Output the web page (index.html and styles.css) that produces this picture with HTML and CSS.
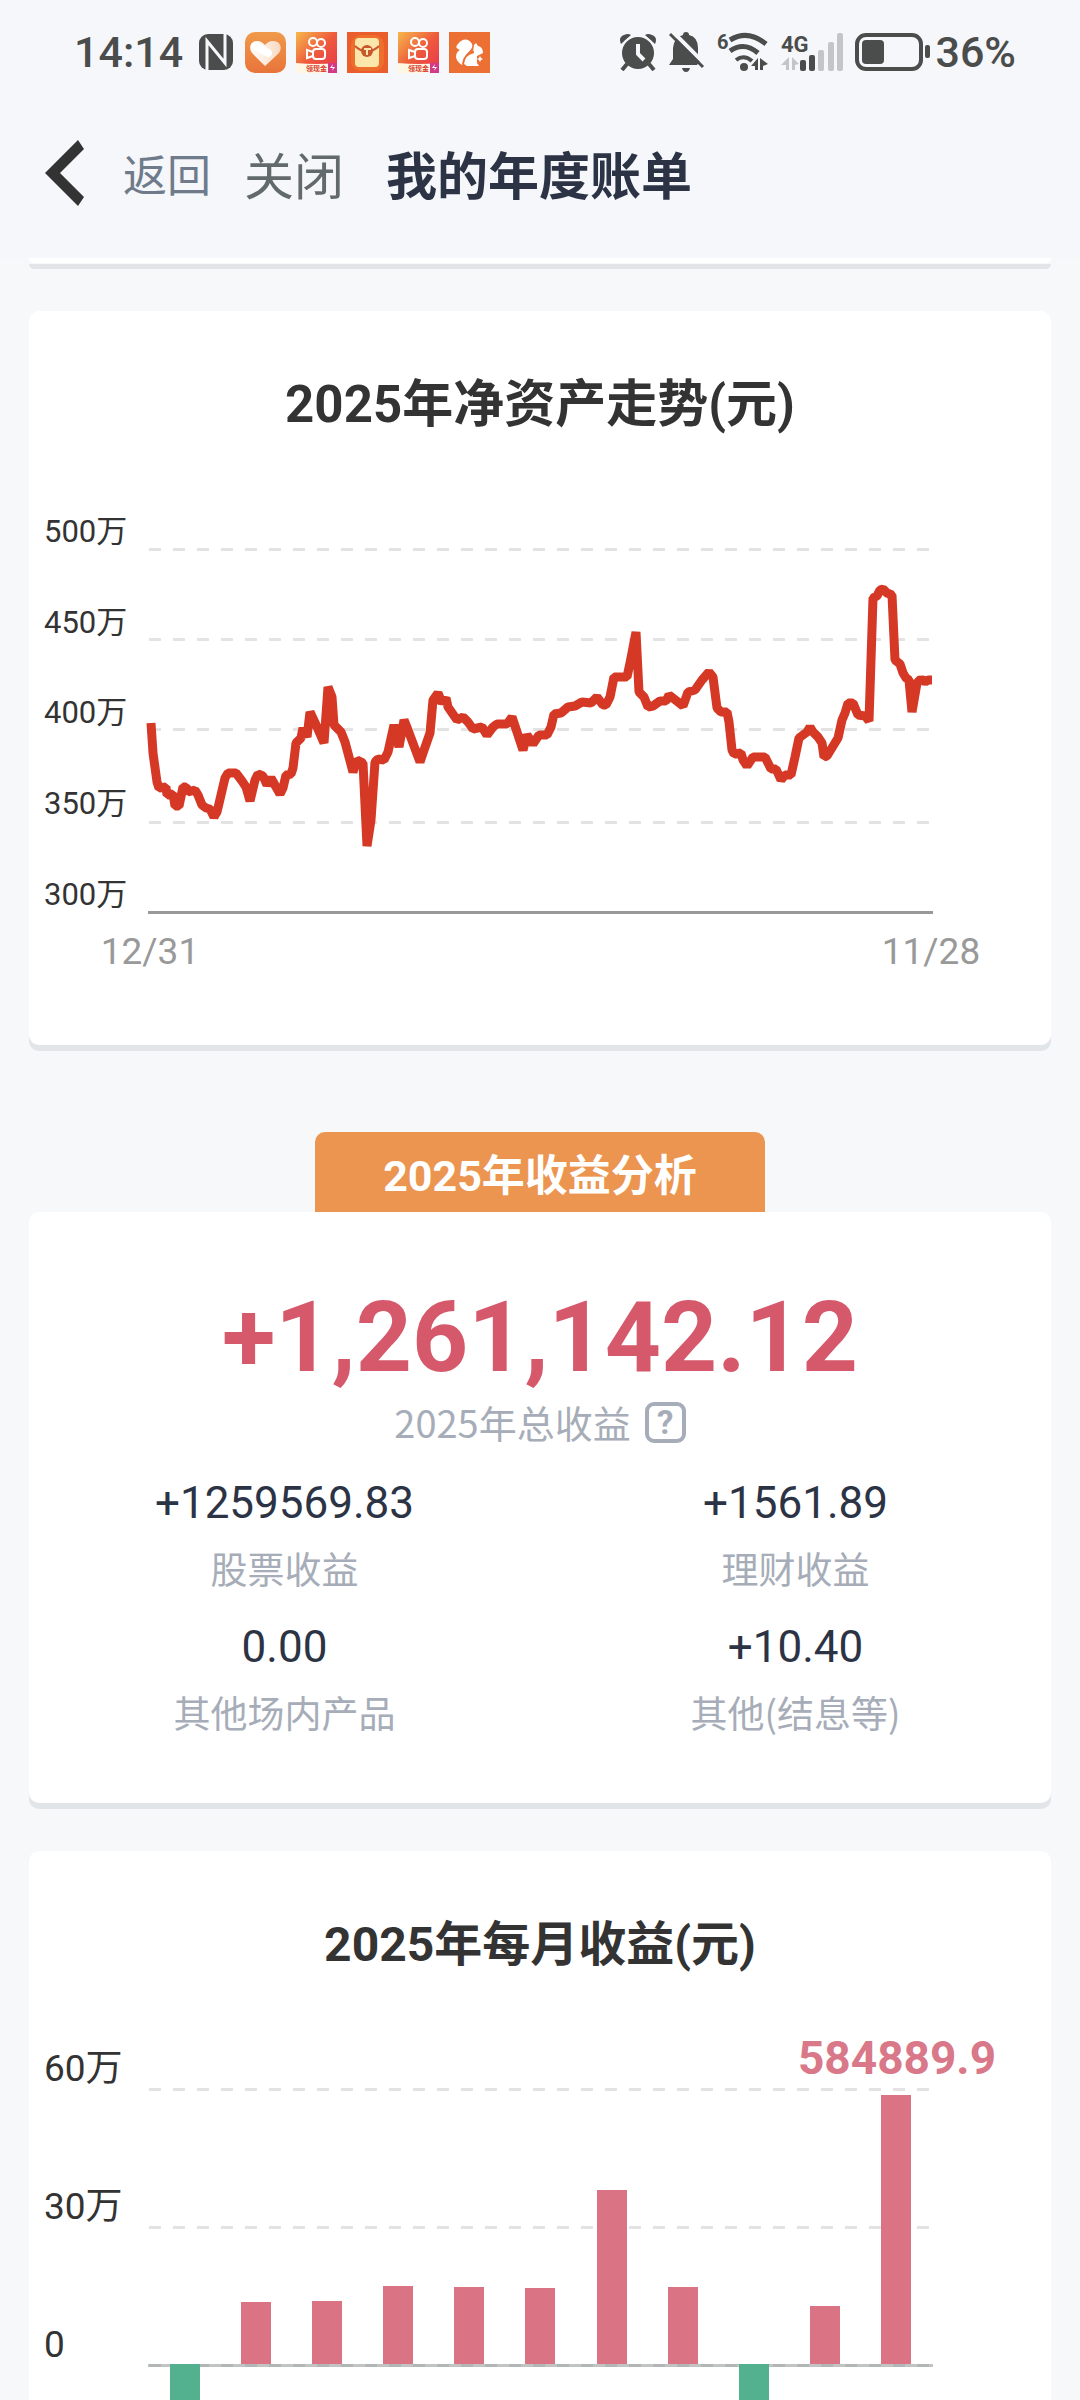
FILE: index.html
```
<!DOCTYPE html>
<html lang="zh-CN">

<head>
    <meta charset="UTF-8">
    <meta name="viewport" content="width=device-width, initial-scale=1.0">
    <title>我的年度账单</title>
    <link rel="stylesheet" href="styles.css">
</head>

<body>
    <div class="app">
        <header class="top">
            <!-- 状态栏 -->
            <div class="status">
                <div class="status-left">
                    <span class="status-time">14:14</span>
                    <svg class="icon-nfc" width="34" height="36" viewBox="0 0 34 36">
                        <rect width="34" height="36" rx="9" fill="#4b4d4c" />
                        <path d="M8 36V7l18 22V0" fill="none" stroke="#f5f7fb" stroke-width="3" />
                        <path d="M13 36V19l8 10" fill="none" stroke="#4b4d4c" stroke-width="3" />
                    </svg>
                    <div class="status-apps">
                        <svg width="41" height="41" viewBox="0 0 41 41">
                            <defs>
                                <linearGradient id="heartBg" x1="0" y1="0" x2="0" y2="1">
                                    <stop offset="0" stop-color="#f09a4b" />
                                    <stop offset="1" stop-color="#e8743a" />
                                </linearGradient>
                                <linearGradient id="heartFg" x1="0" y1="0" x2="1" y2="0">
                                    <stop offset="0" stop-color="#fff" />
                                    <stop offset="1" stop-color="#f9d9c0" />
                                </linearGradient>
                            </defs>
                            <rect width="41" height="41" rx="10" fill="url(#heartBg)" />
                            <path d="M20 34L8 22C3 17 5 9 12 9c4 0 6 2 8 4 2-2 4-4 8-4 8 0 10 8 5 13z" fill="url(#heartFg)" />
                            <path d="M11 14l12 7" stroke="#fff" stroke-width="8" stroke-linecap="round" />
                        </svg>
                        <svg width="41" height="41" viewBox="0 0 41 41">
                            <defs>
                                <linearGradient id="videoBg" x1="0" y1="0" x2="1" y2="1">
                                    <stop offset="0" stop-color="#f6b84c" />
                                    <stop offset="0.5" stop-color="#ee5a3c" />
                                    <stop offset="1" stop-color="#e8344e" />
                                </linearGradient>
                            </defs>
                            <rect width="41" height="41" fill="url(#videoBg)" />
                            <g fill="none" stroke="#fff" stroke-width="2">
                                <circle cx="17" cy="10" r="4" />
                                <circle cx="25" cy="11" r="4" />
                                <rect x="17" y="17" width="12" height="10" rx="3" />
                                <path d="M17 20l-6-2v8l6-2" />
                            </g>
                            <path d="M0 31q20 2 41 0v10H0z" fill="#fff6e3" />
                            <path d="M32 31h9v10h-9z" fill="#d23a86" />
                            <path d="M37 32l-3 4h3l-1 3 3-4h-3z" fill="#fff" />
                            <text class="app-tag" x="10" y="39">领现金</text>
                        </svg>
                        <svg width="41" height="41" viewBox="0 0 41 41">
                            <rect width="41" height="41" fill="#ea5e2c" />
                            <rect x="4" y="3" width="33" height="36" rx="10" fill="#ee6f2c" />
                            <rect x="8" y="6" width="24" height="29" rx="4" fill="#fbe6ac" />
                            <path d="M8 14c7 7 17 7 24 0" fill="none" stroke="#c9572c" stroke-width="2" />
                            <circle cx="20" cy="19" r="6" fill="#c9572c" />
                            <path d="M17 17h7M20 17v6" stroke="#fbe6ac" stroke-width="2" />
                        </svg>
                        <svg width="41" height="41" viewBox="0 0 41 41">
                            <rect width="41" height="41" fill="url(#videoBg)" />
                            <g fill="none" stroke="#fff" stroke-width="2">
                                <circle cx="17" cy="10" r="4" />
                                <circle cx="25" cy="11" r="4" />
                                <rect x="17" y="17" width="12" height="10" rx="3" />
                                <path d="M17 20l-6-2v8l6-2" />
                            </g>
                            <path d="M0 31q20 2 41 0v10H0z" fill="#fff6e3" />
                            <path d="M32 31h9v10h-9z" fill="#d23a86" />
                            <path d="M37 32l-3 4h3l-1 3 3-4h-3z" fill="#fff" />
                            <text class="app-tag" x="10" y="39">领现金</text>
                        </svg>
                        <svg width="41" height="41" viewBox="0 0 41 41">
                            <rect width="41" height="41" fill="#ec7034" />
                            <path d="M13 33C4 27 7 20 11 18c-5-2-4-4-2-6 4-6 11-6 14 0 2 5-5 8-7 13-1 3-2 5-3 8z" fill="#fff" />
                            <path d="M15 32c0-6 4-10 9-12l1-7 2-2 2 3c4 1 5 4 5 7l-6 3 0 7 2 3H18z" fill="#fff" />
                            <path d="M14 32q1-10 11-12" fill="none" stroke="#ec7034" stroke-width="2" />
                            <path d="M31 24l1 2 2 1-2 1-1 2-1-2-2-1 2-1z" fill="#fff" />
                        </svg>
                    </div>
                </div>
                <div class="status-right">
                    <svg width="38" height="38" viewBox="0 0 38 38">
                        <path d="M2 11Q-1 4 5 2q4-2 7 0zM36 11q3-7-3-9-4-2-7 0z" fill="#4b4d4c" />
                        <circle cx="19" cy="20" r="18" fill="#f5f7fb" />
                        <path d="M8 31l-5 6M30 31l5 6" stroke="#4b4d4c" stroke-width="4" />
                        <circle cx="19" cy="20" r="16" fill="#4b4d4c" />
                        <path d="M19 11v10l6 6" fill="none" stroke="#f5f7fb" stroke-width="4" />
                    </svg>
                    <svg width="36" height="40" viewBox="0 0 36 40">
                        <path d="M0 33l4-6V16Q5 5 14 3q0-3 3-3t3 3q9 2 9 13v11l6 6z" fill="#4b4d4c" />
                        <path d="M13 36h8q-1 4-4 4t-4-4z" fill="#4b4d4c" />
                        <path d="M3-1l34 34" stroke="#f5f7fb" stroke-width="4" />
                        <path d="M27 34h10v-11z" fill="#f5f7fb" />
                        <path d="M1 2l33 33" stroke="#4b4d4c" stroke-width="3" />
                    </svg>
                    <svg class="icon-net" width="52" height="42" viewBox="0 0 52 42">
                        <text class="net-tag" x="0" y="18">6</text>
                        <g fill="none" stroke="#4b4d4c" stroke-width="4">
                            <path d="M13 9q18-11 36 4" stroke-width="5" />
                            <path d="M13 20q14-10 28 2" stroke-width="5" />
                            <path d="M19 29q8-6 16 1" />
                        </g>
                        <circle cx="27" cy="36" r="4" fill="#4b4d4c" />
                        <path d="M41 27v12h-3v-4h-4zM43 27v12h3v-4l5-2z" fill="#4b4d4c" />
                    </svg>
                    <svg class="icon-net" width="62" height="40" viewBox="0 0 62 40">
                        <text class="net-tag big" x="0" y="20">4G</text>
                        <path d="M8 25v13H5v-5H0zM11 25v13h3v-5l4-1z" fill="#c3c5c8" />
                        <rect x="19" y="28" width="6" height="11" rx="2" fill="#4b4d4c" />
                        <rect x="28" y="23" width="6" height="16" rx="2" fill="#4b4d4c" />
                        <rect x="37" y="18" width="6" height="21" rx="2" fill="#c3c5c8" />
                        <rect x="47" y="10" width="6" height="29" rx="2" fill="#c3c5c8" />
                        <rect x="56" y="1" width="6" height="38" rx="2" fill="#c3c5c8" />
                    </svg>
                    <div class="status-battery">
                        <svg width="76" height="38" viewBox="0 0 76 38">
                            <rect x="2" y="2" width="64" height="34" rx="9" fill="none" stroke="#4b4d4c" stroke-width="4" />
                            <rect x="7" y="7" width="22" height="24" rx="4" fill="#4b4d4c" />
                            <rect x="70" y="12" width="5" height="13" rx="2" fill="#4b4d4c" />
                        </svg>
                        <span>36%</span>
                    </div>
                </div>
            </div>
            <!-- 导航栏 -->
            <nav class="nav">
                <button type="button" class="nav-arrow" aria-label="后退">
                    <svg width="40" height="66" viewBox="0 0 40 66">
                        <path d="M34 0l6 9-24 24 24 24-6 9L1 33z" fill="#333" />
                    </svg>
                </button>
                <button type="button" class="nav-back">返回</button>
                <button type="button" class="nav-close">关闭</button>
                <h1 class="nav-title">我的年度账单</h1>
            </nav>
        </header>

        <main class="content">
            <section class="card card-prev"></section>

            <!-- 净资产走势 -->
            <section class="card card-trend">
                <h2 class="card-title large">2025年净资产走势(元)</h2>
                <svg class="chart" viewBox="0 0 1022 520">
                    <g class="grid">
                        <path d="M120 69H904" />
                        <path d="M120 159H904" />
                        <path d="M120 249H904" />
                        <path d="M120 342H904" />
                    </g>
                    <path class="axis" d="M119 432H904" />
                    <g class="label-y">
                        <text x="15" y="62">500万</text>
                        <text x="15" y="153">450万</text>
                        <text x="15" y="243">400万</text>
                        <text x="15" y="334">350万</text>
                        <text x="15" y="425">300万</text>
                    </g>
                    <g class="label-x">
                        <text x="121" y="484">12/31</text>
                        <text x="902" y="484">11/28</text>
                    </g>
                    <polyline class="line" points="122,243 124,273 128,302 130,308 137,307 138,315 144,314 146,326 150,326 154,307 157,307 159,312 166,310 169,315 173,325 177,328 181,329 185,337 188,332 196,298 199,293 207,293 213,301 217,307 221,321 226,300 229,294 234,296 238,305 242,298 247,307 251,314 254,308 257,295 262,294 264,288 267,263 272,258 274,248 278,257 281,232 288,247 295,263 299,207 303,217 305,245 312,252 316,262 324,292 328,280 334,283 338,366 342,340 346,282 349,279 355,280 359,272 365,245 370,267 375,240 379,250 391,282 394,273 401,253 404,220 409,213 413,223 417,218 419,227 428,240 434,237 439,242 444,249 453,247 458,255 464,247 468,244 478,244 483,237 494,270 498,255 504,264 510,255 518,255 522,247 525,234 532,233 539,227 546,226 553,222 562,223 568,217 574,225 577,225 581,217 585,197 591,197 598,197 601,183 607,152 610,212 615,217 619,227 624,226 631,221 637,221 640,215 649,222 654,226 659,212 666,210 673,200 680,192 684,197 688,228 692,232 698,232 700,242 703,270 705,274 712,273 714,280 718,286 724,277 736,277 739,283 742,289 747,289 752,300 756,295 762,295 766,277 770,258 778,252 781,247 784,252 789,257 793,263 795,277 798,276 809,258 813,240 816,233 819,223 824,223 829,235 836,236 840,241 844,118 848,116 851,110 854,109 858,113 863,115 866,180 871,184 874,193 877,198 880,200 883,232 888,203 892,199 896,202 899,200 903,200" />
                </svg>
            </section>

            <!-- 收益分析 -->
            <h2 class="tab">2025年收益分析</h2>
            <section class="card card-profit">
                <p class="total">+1,261,142.12</p>
                <div class="total-label">
                    <span>2025年总收益</span>
                    <button type="button" class="help" aria-label="说明">?</button>
                </div>
                <dl class="profit-list">
                    <div class="profit-item">
                        <dd>+1259569.83</dd>
                        <dt>股票收益</dt>
                    </div>
                    <div class="profit-item">
                        <dd>+1561.89</dd>
                        <dt>理财收益</dt>
                    </div>
                    <div class="profit-item">
                        <dd>0.00</dd>
                        <dt>其他场内产品</dt>
                    </div>
                    <div class="profit-item">
                        <dd>+10.40</dd>
                        <dt>其他(结息等)</dt>
                    </div>
                </dl>
            </section>

            <!-- 每月收益 -->
            <section class="card card-month">
                <h2 class="card-title">2025年每月收益(元)</h2>
                <svg class="chart" viewBox="0 0 1022 480">
                    <g class="grid">
                        <path d="M120 69H904" />
                        <path d="M120 207H904" />
                    </g>
                    <path class="axis light" d="M119 345H904" />
                    <path class="axis dash" d="M120 345H904" />
                    <g class="label-y big">
                        <text x="15" y="61">60万</text>
                        <text x="15" y="199">30万</text>
                        <text x="15" y="337">0</text>
                    </g>
                    <g class="bar-up">
                        <rect x="212" y="282" width="30" height="62" />
                        <rect x="283" y="281" width="30" height="63" />
                        <rect x="354" y="266" width="30" height="78" />
                        <rect x="425" y="267" width="30" height="77" />
                        <rect x="496" y="268" width="30" height="76" />
                        <rect x="568" y="170" width="30" height="174" />
                        <rect x="639" y="267" width="30" height="77" />
                        <rect x="781" y="286" width="30" height="58" />
                        <rect x="852" y="75" width="30" height="269" />
                    </g>
                    <g class="bar-down">
                        <rect x="141" y="344" width="30" height="60" />
                        <rect x="710" y="344" width="30" height="90" />
                    </g>
                    <text class="bar-value" x="868" y="54">584889.9</text>
                </svg>
            </section>
        </main>
    </div>
</body>

</html>
```
FILE: styles.css
```
html,
body,
h1,
h2,
p,
dl,
dt,
dd {
    margin: 0;
    padding: 0;
}

body {
    font-family: "Noto Sans CJK SC", "Noto Sans", sans-serif;
    color: #333;
    background: #f7f8fa;
}

button {
    padding: 0;
    border: 0;
    background: none;
    font-family: inherit;
}

svg {
    display: block;
}

/* 数字用 Roboto */

.status,
.card-title,
.chart,
.tab,
.total,
.help,
.profit-item dd {
    font-family: Roboto, "Noto Sans CJK SC", sans-serif;
}

.app {
    display: flex;
    flex-direction: column;
    height: 100vh;
    overflow: hidden;
}

.top {
    flex: none;
    padding-bottom: 16px;
    background: #f5f7fb;
}

/* 状态栏 */

.status {
    display: flex;
    justify-content: space-between;
    align-items: center;
    height: 104px;
    padding: 0 64px 0 74px;
    color: #4b4d4c;
    font-size: 43px;
    font-weight: 500;
}

.status-left,
.status-right,
.status-apps,
.status-battery {
    display: flex;
    align-items: center;
}

.status-left {
    gap: 12px;
}

.status-apps {
    gap: 10px;
}

.status-right {
    gap: 12px;
}

.status-battery {
    gap: 4px;
}

.icon-nfc {
    margin-left: 4px;
}

.icon-net {
    overflow: visible;
}

.app-tag {
    font-size: 7px;
    font-weight: 700;
    fill: #d8402c;
}

.net-tag {
    font-size: 20px;
    font-weight: 700;
    fill: #4b4d4c;
}

.net-tag.big {
    font-size: 22px;
}

/* 导航栏 */

.nav {
    display: flex;
    align-items: center;
    height: 138px;
    padding: 0 44px;
}

.nav-back {
    margin-left: 39px;
    font-size: 44px;
    color: #6f7b8b;
}

.nav-close {
    margin-left: 33px;
    font-size: 50px;
    color: #636a6d;
}

.nav-title {
    margin-left: 42px;
    font-size: 51px;
    font-weight: 700;
    color: #2c3344;
}

/* 卡片 */

.content {
    flex: 1;
    min-height: 0;
    padding: 0 29px;
    overflow: hidden;
}

.card {
    margin-bottom: 48px;
    border-radius: 10px;
    background: #fff;
    box-shadow: 0 6px 0 #e1e5e8;
}

.card-prev {
    height: 5px;
    border-radius: 0 0 10px 10px;
}

.card-trend {
    padding: 58px 0 45px;
    margin-bottom: 87px;
}

.card-month {
    padding-top: 58px;
}

.card-title {
    margin-bottom: 39px;
    font-size: 48px;
    line-height: 72px;
    font-weight: 700;
    text-align: center;
}

.card-title.large {
    font-size: 51px;
}

/* 图表 */

.chart {
    width: 100%;
    height: auto;
}

.grid path {
    stroke: #e3e3e3;
    stroke-width: 3;
    stroke-dasharray: 12 12;
    shape-rendering: crispEdges;
}

.axis {
    stroke: #999;
    stroke-width: 3;
    shape-rendering: crispEdges;
}

.axis.light {
    stroke: #c2c4c4;
}

.axis.dash {
    stroke: #b3b6b6;
    stroke-dasharray: 12 12;
}

.label-y {
    font-size: 31px;
    fill: #333;
}

.label-y.big {
    font-size: 37px;
}

.label-x {
    font-size: 37px;
    fill: #999;
    text-anchor: middle;
}

.line {
    fill: none;
    stroke: #d63826;
    stroke-width: 9;
    stroke-linejoin: bevel;
}

.bar-up {
    fill: #da7384;
}

.bar-down {
    fill: #54b190;
}

.bar-value {
    font-size: 46px;
    font-weight: 700;
    fill: #d87888;
    text-anchor: middle;
}

/* 收益分析 */

.tab {
    width: 44%;
    margin: 0 auto;
    padding-top: 8px;
    border-radius: 10px 10px 0 0;
    background: #eb9551;
    color: #fff;
    font-size: 43px;
    line-height: 72px;
    font-weight: 700;
    text-align: center;
}

.card-profit {
    padding: 70px 0 67px;
}

.total {
    font-size: 98px;
    line-height: 112px;
    font-weight: 700;
    text-align: center;
    color: #d6596b;
}

.total-label {
    display: flex;
    justify-content: center;
    align-items: center;
    gap: 14px;
    margin: 4px 0 27px;
    color: #a6adb8;
    font-size: 38px;
    line-height: 48px;
}

.help {
    box-sizing: border-box;
    width: 41px;
    height: 41px;
    border: 4px solid #a6adb8;
    border-radius: 9px;
    color: #a6adb8;
    font-size: 33px;
    line-height: 33px;
    font-weight: 700;
}

.profit-list {
    display: grid;
    grid-template-columns: 1fr 1fr;
    row-gap: 25px;
}

.profit-item {
    display: flex;
    flex-direction: column;
    gap: 11px;
    text-align: center;
}

.profit-item dd {
    font-size: 44px;
    line-height: 60px;
    color: #2c3344;
}

.profit-item dt {
    font-size: 37px;
    line-height: 48px;
    color: #a6adb8;
}
```
